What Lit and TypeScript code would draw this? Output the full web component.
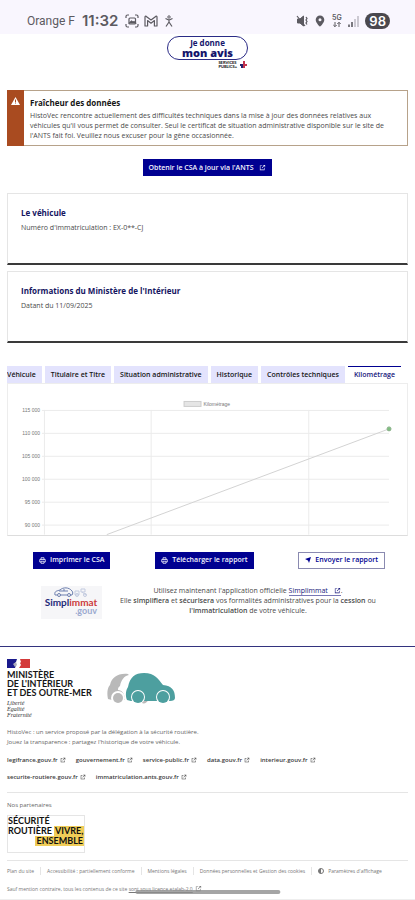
import { LitElement, html, css, svg } from "lit";
import { customElement, property, state } from "lit/decorators.js";

const externalIcon = html`<svg class="ext" viewBox="0 0 24 24" aria-hidden="true">
  <path
    fill="currentColor"
    d="M10 5v2H5v12h12v-5h2v7H3V5h7Zm11-2v8h-2V6.4l-7.8 7.8-1.4-1.4L17.6 5H13V3h8Z"
  />
</svg>`;

@customElement("status-bar")
export class StatusBar extends LitElement {
  static styles = css`
    :host {
      display: flex;
      align-items: center;
      justify-content: space-between;
      height: 34px;
      padding: 8px 25px 0 27px;
      box-sizing: border-box;
      background: #f9f6fe;
      color: #5c5a61;
      font-family: Inter, Roboto, sans-serif;
    }

    .group {
      display: flex;
      align-items: center;
      gap: 5px;
    }

    .carrier {
      font-family: Roboto, sans-serif;
      font-size: 12px;
      line-height: 16px;
    }

    .time {
      margin: 0 2px;
      font-size: 15px;
      line-height: 16px;
      font-weight: 600;
    }

    .right {
      gap: 6px;
    }

    svg {
      display: block;
      fill: none;
      stroke: currentColor;
    }

    .battery {
      padding: 0 4px;
      border-radius: 8px;
      background: #4a484e;
      color: #fff;
      font-size: 13px;
      line-height: 16px;
      font-weight: 600;
    }
  `;

  render() {
    return html`
      <div class="group">
        <span class="carrier">Orange F</span>
        <span class="time">11:32</span>
        <svg width="14" height="14" viewBox="0 0 14 14" stroke-width="1.2">
          <path d="M1 4V2.500Q1 1 2.500 1H4M10 1h1.500Q13 1 13 2.500V4M13 10v1.500Q13 13 11.500 13H10M4 13H2.500Q1 13 1 11.500V10" />
          <rect x="4" y="4" width="6.500" height="6" rx="1" />
          <path fill="currentColor" d="M4.500 9l2-2 1.500 1.200L9 7.500l1.500 1.500Z" />
        </svg>
        <svg width="14" height="12" viewBox="0 0 14 12" stroke-width="1.200" stroke-linejoin="round">
          <path d="M1 11V2.200Q1 .8 2.300 1.400L7 5l4.700-3.600Q13 .8 13 2.200V11h-2.600V5.600L7 8.200 3.600 5.600V11Z" />
        </svg>
        <svg width="14" height="12" viewBox="0 0 14 12">
          <circle cx="6" cy="2" r="1.200" />
          <path stroke-width="1.200" d="M2.500 3.500 6 5l3.500-1.500M6 5v2.500M6 7l-3 4.500M6 7l3 4.500" />
        </svg>
      </div>
      <div class="group right">
        <svg width="13" height="12" viewBox="0 0 13 12">
          <path fill="currentColor" d="M1.500 4H4l3.500-3v10L4 8H1.500Z" />
          <path stroke-width="1.200" d="M1 1l8 10M10 2l1 1.500-1 1.500 1 1.500L10 8l1 1.500" />
        </svg>
        <svg width="10" height="12" viewBox="0 0 10 12">
          <path fill="currentColor" stroke="none" fill-rule="evenodd" d="M5 .5a4.300 4.300 0 0 0-4.300 4.300C.7 8 5 11.800 5 11.800S9.300 8 9.300 4.800A4.300 4.300 0 0 0 5 .5Zm0 2.800a1.500 1.500 0 1 1 0 3 1.500 1.500 0 0 1 0-3Z" />
        </svg>
        <svg width="11" height="14" viewBox="0 0 11 14">
          <text x="1" y="6" fill="currentColor" stroke="none" font-size="7" font-weight="600">5G</text>
          <path d="M4 8v4.500M2.300 11 4 12.700 5.700 11M8 13V8.300M6.300 10 8 8.300 9.700 10" />
        </svg>
        <svg width="11" height="12" viewBox="0 0 11 12" stroke-width="1.600">
          <path d="M1 9.500V12M4 7V12" />
          <path opacity=".35" d="M7 4V12M10 1V12" />
        </svg>
        <span class="battery">98</span>
      </div>
    `;
  }
}

@customElement("mileage-chart")
export class MileageChart extends LitElement {
  static styles = css`
    :host {
      display: block;
    }

    svg {
      display: block;
      width: 100%;
    }

    .grid {
      stroke: #ebebeb;
      stroke-width: 1;
    }

    .series {
      stroke: #d3d3d3;
      stroke-width: 1;
    }

    .label {
      fill: #777;
      font-family: "Liberation Sans", Arial, sans-serif;
      font-size: 5px;
    }
  `;

  @property({ type: Array })
  ticks: string[] = ["115 000", "110 000", "105 000", "100 000", "95 000", "90 000"];

  render() {
    return html`
      <svg viewBox="0 0 400 151" role="img" aria-label="Kilométrage">
        <rect x="176.500" y="17.500" width="17" height="5" fill="#e5e5e5" stroke="#ccc" />
        <text class="label" x="196" y="22">Kilométrage</text>
        ${this.ticks.map(
          (tick, i) => svg`
            <line class="grid" x1="34" x2="382" y1=${26.5 + i * 23} y2=${26.5 + i * 23} />
            <text class="label" text-anchor="end" x="32" y=${28.5 + i * 23}>${tick}</text>
          `
        )}
        <path class="grid" d="M36.500 26V151M143.500 26V151M301.500 26V151" />
        <path class="series" fill="none" d="M99 151 382 45" />
        <circle cx="382" cy="45" r="2" fill="#7fbf7f" stroke="#8ab08a" />
      </svg>
    `;
  }
}

@customElement("app-root")
export class AppRoot extends LitElement {
  static styles = css`
    :host {
      display: block;
      position: relative;
      background: #fff;
      color: #4a4a4a;
      font-family: "Open Sans", "Noto Sans", sans-serif;
      font-size: 7px;
      line-height: 10px;
    }

    h2,
    h3,
    p,
    ul {
      margin: 0;
      padding: 0;
    }

    ul {
      list-style: none;
    }

    a {
      color: inherit;
      text-decoration: none;
    }

    b {
      font-weight: 600;
    }

    button {
      border: 0;
      font-family: inherit;
      cursor: pointer;
    }

    .ext {
      width: 7px;
      height: 7px;
      margin-left: 2px;
      vertical-align: -1px;
    }

    .opinion {
      display: flex;
      flex-direction: column;
      align-items: flex-end;
      width: 81px;
      margin: 2px auto 0;
    }

    .pill {
      display: flex;
      flex-direction: column;
      align-items: center;
      justify-content: center;
      width: 100%;
      height: 24px;
      box-sizing: border-box;
      border: 1px solid #2a2a86;
      border-radius: 12px;
      color: #15156b;
      font-size: 8px;
      line-height: 8px;
      font-weight: 700;
    }

    .pill strong {
      font-size: 11px;
      line-height: 11px;
    }

    .services {
      display: flex;
      align-items: center;
      gap: 2px;
      height: 10px;
      color: #222;
      font-family: Lato, sans-serif;
      font-size: 4px;
      line-height: 4px;
      font-weight: 900;
    }

    .main {
      padding: 0 7px;
    }

    .alert {
      display: flex;
      margin-top: 20px;
      border: 1px solid #b7a28a;
      border-left: 0;
    }

    .alert-side {
      flex: none;
      width: 17px;
      margin: -1px 0;
      padding-top: 7px;
      box-sizing: border-box;
      background: #a94b20;
      text-align: center;
    }

    .alert-body {
      padding: 7px 16px 4px 6px;
    }

    .alert-title {
      margin-bottom: 3px;
      color: #161616;
      font-size: 8px;
      line-height: 10px;
    }

    .btn {
      display: inline-flex;
      align-items: center;
      gap: 4px;
      height: 17px;
      padding: 0 6px;
      background: #000091;
      color: #f5f5fe;
      font-size: 7px;
      line-height: 10px;
      font-weight: 600;
    }

    .btn.secondary {
      border: 1px solid #8a8ab0;
      background: #fff;
      color: #000091;
    }

    .update {
      display: flex;
      justify-content: center;
      margin: 13px 0 17px;
    }

    .card {
      height: 72px;
      margin-bottom: 6px;
      padding: 13px;
      box-sizing: border-box;
      border: 1px solid #e5e5e5;
      border-bottom: 2px solid #3a3a3a;
    }

    .card h3 {
      margin-bottom: 4px;
      color: #15155f;
      font-size: 8px;
      line-height: 12px;
    }

    .tabs {
      display: flex;
      justify-content: flex-end;
      gap: 3px;
      margin-top: 23px;
      padding-right: 7px;
      overflow: hidden;
    }

    .tab {
      flex: none;
      height: 17px;
      padding: 0 6px;
      border-top: 1px solid #e3e3fd;
      background: #e3e3fd;
      color: #161616;
      font-size: 7px;
      line-height: 10px;
      font-weight: 600;
      white-space: nowrap;
    }

    .tab.selected {
      border-top: 1px solid #000091;
      background: #fff;
      color: #15157a;
    }

    .panel {
      border: 1px solid #ededed;
      border-bottom-color: #ddd;
    }

    .actions {
      display: flex;
      justify-content: space-between;
      margin: 16px 23px 17px 26px;
    }

    .promo {
      display: flex;
      align-items: flex-start;
      gap: 16px;
      padding: 0 30px 0 34px;
    }

    .promo-logo {
      flex: none;
      width: 61px;
      height: 33px;
    }

    .promo p {
      flex: 1;
      text-align: center;
    }

    .promo a {
      border-bottom: 1px solid #7777b5;
      color: #15157a;
    }

    .promo a .ext {
      margin-left: 4px;
    }

    .footer {
      margin-top: 27px;
      padding: 12px 7px 5px;
      border-top: 1px solid #33337f;
      border-bottom: 1px solid #eee;
      color: #666;
      font-size: 6px;
    }

    .brand {
      display: flex;
      gap: 15px;
      margin-bottom: 9px;
    }

    .flag {
      display: block;
      width: 23px;
      height: 9px;
      margin-bottom: 2px;
    }

    .ministry {
      color: #161616;
      font-family: Lato, sans-serif;
      font-size: 9px;
      line-height: 9px;
      font-weight: 700;
    }

    .motto {
      margin-top: 3px;
      color: #333;
      font-family: "Liberation Serif", serif;
      font-size: 6px;
      line-height: 6px;
      font-style: italic;
    }

    .car {
      width: 68px;
      height: 31px;
      margin-top: 14px;
    }

    .links {
      display: flex;
      flex-wrap: wrap;
      gap: 7px 10px;
      margin: 8px 50px 10px 0;
      color: #3a3a3a;
      font-weight: 600;
    }

    .links .ext {
      width: 6px;
      height: 6px;
    }

    .partners {
      padding: 7px 0;
      border-top: 1px solid #e5e5e5;
      border-bottom: 1px solid #e5e5e5;
    }

    .partner-logo {
      width: 78px;
      height: 38px;
      margin-top: 5px;
      box-sizing: border-box;
      border: 1px solid #e5e5e5;
      color: #111;
      font-family: Lato, sans-serif;
      font-size: 9px;
      line-height: 10px;
      font-weight: 700;
      white-space: nowrap;
    }

    .partner-logo .last {
      text-align: right;
    }

    .partner-logo mark {
      display: inline-block;
      padding: 0 1px;
      background: #f0cd58;
      color: inherit;
    }

    .legal {
      display: flex;
      margin: 6px 0 9px;
      color: #777;
      font-size: 5px;
    }

    .legal li + li {
      margin-left: 6px;
      padding-left: 6px;
      border-left: 1px solid #e5e5e5;
    }

    .legal li {
      line-height: 8px;
      white-space: nowrap;
    }

    .legal svg {
      width: 6px;
      height: 6px;
      margin-right: 4px;
      vertical-align: -1px;
    }

    .licence {
      color: #777;
      font-size: 5px;
    }

    .licence a {
      text-decoration: underline;
    }

    .home-bar {
      position: absolute;
      bottom: 6px;
      left: 50%;
      width: 35%;
      height: 4px;
      border-radius: 2px;
      background: #8f8f8f;
      opacity: 0.8;
      transform: translateX(-50%);
    }
  `;

  @state()
  private selectedTab = "Kilométrage";

  private tabs = [
    "Véhicule",
    "Titulaire et Titre",
    "Situation administrative",
    "Historique",
    "Contrôles techniques",
    "Kilométrage",
  ];

  private links = [
    "legifrance.gouv.fr",
    "gouvernement.fr",
    "service-public.fr",
    "data.gouv.fr",
    "interieur.gouv.fr",
    "securite-routiere.gouv.fr",
    "immatriculation.ants.gouv.fr",
  ];

  private renderPrintIcon() {
    return html`
      <svg width="7" height="7" viewBox="0 0 14 14" fill="none" stroke="currentColor" stroke-width="1.600">
        <path d="M4 5V1.500h6V5M4 10H1.500V5h11v5H10M4 8.500h6v4H4Z" />
      </svg>
    `;
  }

  private renderBrand() {
    return html`
      <div class="brand">
        <div>
          <svg class="flag" viewBox="0 0 23 9">
            <path fill="#1a1a8c" d="M0 0h10L9 3 7 5l2 1-1 3H0Z" />
            <path fill="#d33a3a" d="M13 0h10v9H12l2-3-1-2 1-1Z" />
            <path fill="#aab" d="M6 5l3-2 1 3-2 2Z" />
          </svg>
          <div class="ministry">MINISTÈRE<br />DE L'INTÉRIEUR<br />ET DES OUTRE-MER</div>
          <div class="motto">Liberté<br />Égalité<br />Fraternité</div>
        </div>
        <svg class="car" viewBox="0 0 68 31">
          <path fill="#b9b9b9" d="M21 1C11 0 5 4 3 12 0 15 0 21 1 26l4 1h13l6-22Z" />
          <path fill="#fff" d="M22 2c-5 1-8 5-9 11-2 1-2 3-2 4 4 0 7 4 7 10h5l6-24Z" />
          <circle cx="11" cy="25" r="7" fill="#fff" />
          <circle cx="11" cy="25" r="5" fill="#b9b9b9" />
          <path fill="#b9b9b9" d="M34 27h7c-1 3-4 4-6 3Z" />
          <path fill="#4d9f9f" d="M20 27c-2-5-1-10 1-13C23 4 28 0 37 0c11 0 14 6 19 12 9 1 12 5 12 13 0 2-2 3-5 3H24Z" />
          <circle cx="31" cy="24" r="7" fill="#fff" />
          <circle cx="31" cy="24" r="6" fill="#4d9f9f" />
          <circle cx="56" cy="24" r="7" fill="#fff" />
          <circle cx="56" cy="24" r="6" fill="#4d9f9f" />
        </svg>
      </div>
    `;
  }

  render() {
    return html`
      <status-bar></status-bar>
      <div class="opinion">
        <a class="pill" href="#avis"><span>Je donne</span><strong>mon avis</strong></a>
        <div class="services">
          <span>SERVICES<br />PUBLICS+</span>
          <svg width="9" height="8" viewBox="0 0 9 8">
            <path fill="#c2334d" d="M4 0h2v3h2v2H6v2H4Z" />
            <path fill="#23236e" d="M1 3h3v4H2V5H1Z" />
          </svg>
        </div>
      </div>

      <div class="main">
        <div class="alert">
          <div class="alert-side">
            <svg width="9" height="8" viewBox="0 0 18 16">
              <path fill="#fff" d="M9 0l9 16H0Z" />
              <path fill="#a94b20" d="M8 5h2v5H8Zm0 6h2v2H8Z" />
            </svg>
          </div>
          <div class="alert-body">
            <h3 class="alert-title">Fraîcheur des données</h3>
            <p>
              HistoVec rencontre actuellement des difficultés techniques dans la mise à jour des données relatives aux
              véhicules qu'il vous permet de consulter. Seul le certificat de situation administrative disponible sur le
              site de l'ANTS fait foi. Veuillez nous excuser pour la gêne occasionnée.
            </p>
          </div>
        </div>

        <div class="update">
          <button class="btn"><span>Obtenir le CSA à jour via l'ANTS</span>${externalIcon}</button>
        </div>

        <div class="card">
          <h3>Le véhicule</h3>
          <p>Numéro d'immatriculation : EX-0**-CJ</p>
        </div>
        <div class="card">
          <h3>Informations du Ministère de l'Intérieur</h3>
          <p>Datant du 11/09/2025</p>
        </div>

        <div class="tabs" role="tablist">
          ${this.tabs.map(
            (tab) => html`
              <button
                class="tab ${tab === this.selectedTab ? "selected" : ""}"
                role="tab"
                aria-selected=${tab === this.selectedTab}
                @click=${() => (this.selectedTab = tab)}
              >${tab}</button>
            `
          )}
        </div>
        <div class="panel"><mileage-chart></mileage-chart></div>

        <div class="actions">
          <button class="btn">${this.renderPrintIcon()}Imprimer le CSA</button>
          <button class="btn">${this.renderPrintIcon()}Télécharger le rapport</button>
          <button class="btn secondary">
            <svg width="6" height="6" viewBox="0 0 12 12"><path fill="currentColor" d="M12 0 8 12 6 7 0 4Z" /></svg>
            Envoyer le rapport
          </button>
        </div>

        <div class="promo">
          <svg class="promo-logo" viewBox="0 0 61 33" font-weight="700" font-family="Lato, sans-serif">
            <rect width="61" height="33" fill="#f6f6f8" />
            <g fill="none" stroke="#6d7fae">
              <path d="M16 9H14c-1-4 2-4 5-5 3-3 9-3 12 1 1 1 1 3 0 4h-2M19 9h7M18 5h9M23 3v2" />
              <circle cx="18" cy="9" r="1.500" />
              <circle cx="28" cy="9" r="1.500" />
            </g>
            <g fill="none" stroke="#c3cbe0">
              <path d="M34 9V5h4v4ZM40 3h4v3h-4ZM41 6l4 3" />
              <circle cx="36" cy="9" r="1.500" />
              <circle cx="44" cy="9" r="1.500" />
            </g>
            <text x="30" y="20" text-anchor="middle" font-size="10" fill="#1e2a78">Simpl<tspan fill="#cc3b3b">immat</tspan></text>
            <text x="56" y="28" text-anchor="end" font-size="9" fill="#9aa9cf">.gouv</text>
          </svg>
          <p>
            Utilisez maintenant l'application officielle <a href="#simplimmat">Simplimmat ${externalIcon}</a>.<br />
            Elle <b>simplifiera</b> et <b>sécurisera</b> vos formalités administratives pour la <b>cession</b> ou
            <b>l'immatriculation</b> de votre véhicule.
          </p>
        </div>
      </div>

      <footer class="footer">
        ${this.renderBrand()}
        <p>HistoVec : un service proposé par la délégation à la sécurité routière.</p>
        <p>Jouez la transparence : partagez l'historique de votre véhicule.</p>
        <ul class="links">
          ${this.links.map((link) => html`<li><a href="https://${link}">${link}${externalIcon}</a></li>`)}
        </ul>
        <div class="partners">
          <p>Nos partenaires</p>
          <div class="partner-logo">
            <div>SÉCURITÉ</div>
            <div>ROUTIÈRE <mark>VIVRE,</mark></div>
            <div class="last"><mark>ENSEMBLE</mark></div>
          </div>
        </div>
        <ul class="legal">
          <li><a href="#plan">Plan du site</a></li>
          <li><a href="#accessibilite">Accessibilité : partiellement conforme</a></li>
          <li><a href="#mentions">Mentions légales</a></li>
          <li><a href="#donnees">Données personnelles et Gestion des cookies</a></li>
          <li>
            <a href="#affichage"
              ><svg viewBox="0 0 12 12"><circle cx="6" cy="6" r="5" fill="none" stroke="currentColor" stroke-width="2" /><path fill="currentColor" d="M6 1a5 5 0 0 0 0 10Z" /></svg>Paramètres d'affichage</a
            >
          </li>
        </ul>
        <p class="licence">
          Sauf mention contraire, tous les contenus de ce site
          <a href="#licence">sont sous licence etalab-2.0${externalIcon}</a>
        </p>
      </footer>
      <div class="home-bar"></div>
    `;
  }
}
